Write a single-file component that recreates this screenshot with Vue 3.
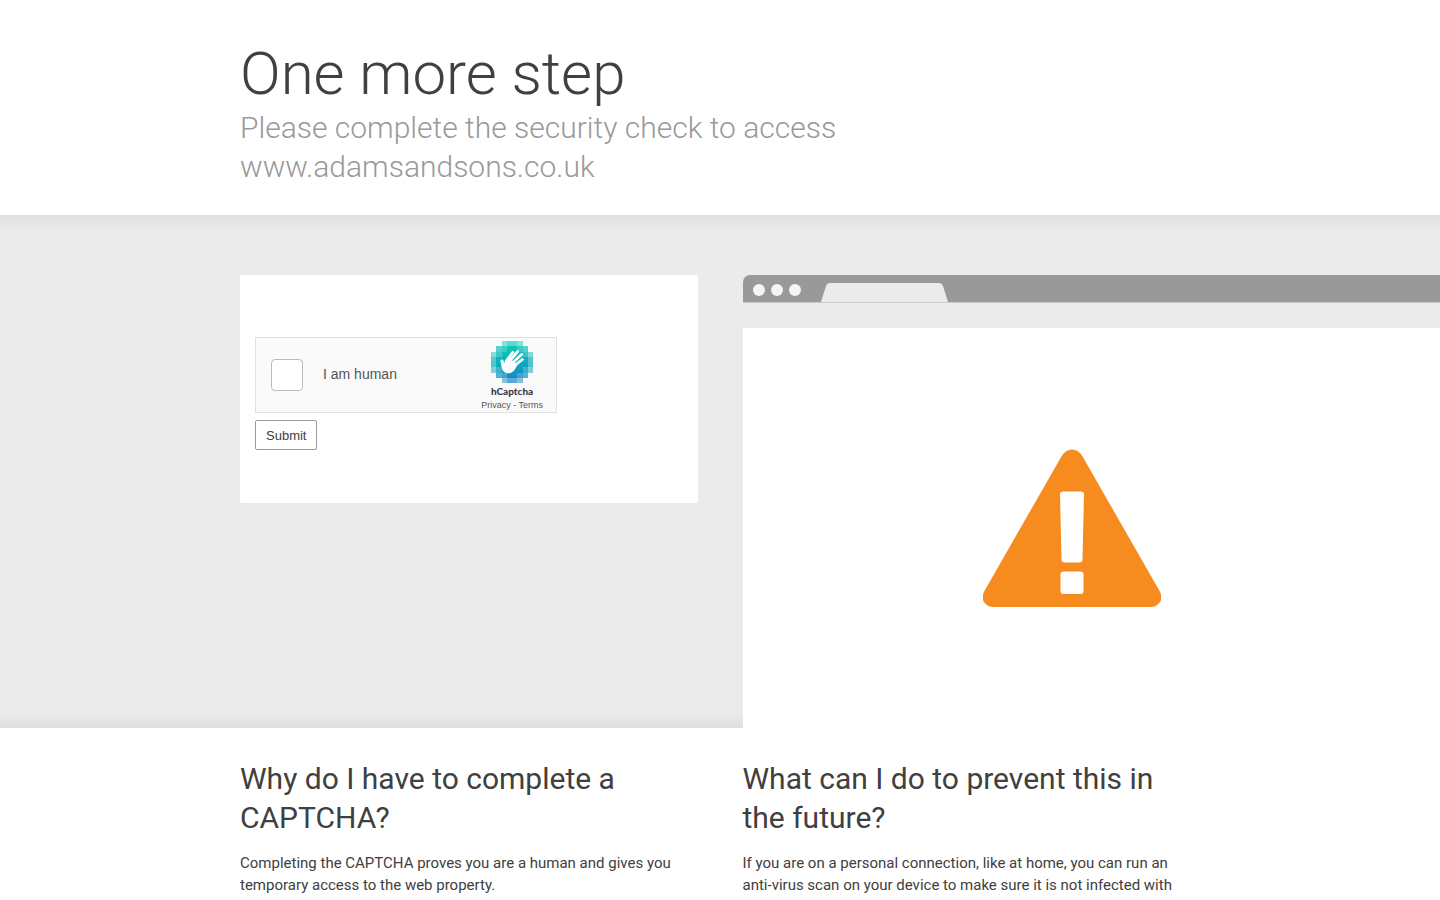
<script setup>
const cells = []
const fades = { '0-2': 0.5, '0-3': 0.7, '1-1': 0.7, '1-2': 0.8 }
for (let row = 0; row < 8; row++) {
  for (let col = 0; col < 8; col++) {
    const a = Math.min(row, 7 - row)
    const b = Math.min(col, 7 - col)
    const lo = Math.min(a, b)
    const hi = Math.max(a, b)
    if (lo === 0 && hi < 2) continue
    cells.push({ x: col * 4, y: row * 4, o: fades[`${lo}-${hi}`] || 1 })
  }
}
</script>

<template>
  <div class="page">
    <header class="wrapper header">
      <h1>One more step</h1>
      <h2>Please complete the security check to access www.adamsandsons.co.uk</h2>
    </header>

    <main>
      <section class="highlight">
        <div class="wrapper columns">
          <form class="challenge" @submit.prevent>
            <div class="captcha">
              <input id="human" type="checkbox" />
              <label for="human">I am human</label>
              <div class="brand">
                <svg class="logo" viewBox="0 0 32 32" aria-hidden="true">
                  <defs>
                    <linearGradient id="teal" gradientUnits="userSpaceOnUse" x1="14" y1="0" x2="17" y2="32">
                      <stop offset="0" stop-color="#12cdb9" />
                      <stop offset="0.5" stop-color="#0bafbb" />
                      <stop offset="1" stop-color="#1580c4" />
                    </linearGradient>
                  </defs>
                  <g fill="url(#teal)" shape-rendering="crispEdges">
                    <rect v-for="(c, i) in cells" :key="i" :x="c.x" :y="c.y" width="4" height="4" :opacity="c.o" />
                  </g>
                  <g fill="none" stroke="#fff" stroke-linecap="round">
                    <path d="M11.500 15.500L16.600 8.600M13.500 16L20.300 8M15.500 17.500L23.300 10.200M17 19.500L23.900 14.100" stroke-width="2.100" />
                    <path d="M8.400 15.200L9.800 19" stroke-width="2.300" />
                  </g>
                  <path d="M10.200 17L10.700 15.200L12 13.500L15 14L18 16L20 18.400C18.800 20.500 17.800 22.500 16.300 23.700C13.800 25.400 10.200 24.600 8.800 22C7.900 20 7.700 17.800 7.300 15.500Z" fill="#fff" />
                </svg>
                <span class="name">hCaptcha</span>
                <span class="links"><a href="#privacy">Privacy</a> - <a href="#terms">Terms</a></span>
              </div>
            </div>
            <button type="submit">Submit</button>
          </form>

          <div class="browser">
            <div class="bar">
              <i></i><i></i><i></i>
              <svg class="tab" viewBox="0 0 128 19" aria-hidden="true">
                <path d="M0 19L5 3Q6 0 9 0H118Q121 0 122 3L127 19Z" fill="#ebebeb" />
              </svg>
            </div>
            <div class="screen">
              <svg class="warning" viewBox="0 0 178 158" aria-hidden="true">
                <path d="M79 6.500Q83 0.500 89 0.500Q95 0.500 99 6.500L176 141Q180 148 177 153Q174 158 167 158H11Q4 158 1 153Q-2 148 2 141Z" fill="#f68b1f" />
                <path d="M80 42.500H98Q101 42.500 101 45.500L99.500 110Q99.500 113.500 96.500 113.500H81.500Q78.500 113.500 78.500 110L77 45.500Q77 42.500 80 42.500Z" fill="#fff" />
                <rect x="77.500" y="122.500" width="23" height="22.500" rx="3" fill="#fff" />
              </svg>
            </div>
          </div>
        </div>
      </section>

      <section class="wrapper columns answers">
        <article>
          <h2>Why do I have to complete a CAPTCHA?</h2>
          <p>Completing the CAPTCHA proves you are a human and gives you temporary access to the web property.</p>
        </article>
        <article>
          <h2>What can I do to prevent this in the future?</h2>
          <p>If you are on a personal connection, like at home, you can run an anti-virus scan on your device to make sure it is not infected with</p>
        </article>
      </section>
    </main>
  </div>
</template>

<style>
body {
  margin: 0;
  background: #fff;
}
</style>

<style scoped>
.page {
  font-family: Roboto, "Liberation Sans", sans-serif;
  font-size: 15px;
  line-height: 22px;
  color: #404040;
  overflow: hidden;
}
.page * {
  box-sizing: border-box;
}
.wrapper {
  max-width: 960px;
  margin: 0 auto;
}
h1,
h2,
p {
  margin: 0;
}
h1 {
  font-size: 60px;
  line-height: 68px;
  font-weight: 300;
}
h2 {
  font-size: 30px;
  line-height: 39px;
  font-weight: 400;
}
.header {
  padding: 40px 0 29px;
}
.header h2 {
  max-width: 640px;
  font-weight: 300;
  color: #999;
}
.columns {
  display: grid;
  grid-template-columns: 1fr 1fr;
  column-gap: 45px;
}
.highlight {
  padding-top: 60px;
  background:
    linear-gradient(#dedede, #ebebeb) top / 100% 14px no-repeat,
    linear-gradient(#ebebeb, #dedede) bottom / 100% 14px no-repeat,
    #ebebeb;
}
.challenge {
  align-self: start;
  padding: 62px 15px 53px;
  background: #fff;
  border-radius: 2px;
}
.captcha {
  display: flex;
  align-items: center;
  width: 302px;
  height: 76px;
  padding: 0 13px 0 15px;
  background: #fafafa;
  border: 1px solid #e0e0e0;
  font-family: "Liberation Sans", Arial, sans-serif;
}
.captcha input {
  appearance: none;
  width: 32px;
  height: 32px;
  margin: 0;
  background: #fff;
  border: 1px solid #bbb;
  border-radius: 4px;
}
.captcha label {
  padding-bottom: 2px;
  margin-left: 20px;
  font-size: 14px;
  color: #555;
}
.brand {
  display: flex;
  flex-direction: column;
  align-items: center;
  padding-top: 2px;
  margin-left: auto;
}
.logo {
  width: 42px;
  height: 42px;
}
.name {
  font-family: Lato, "Noto Sans", sans-serif;
  font-size: 10px;
  line-height: 16px;
  font-weight: 900;
  color: #3b3b4f;
}
.links {
  font-size: 9px;
  line-height: 12px;
  color: #555;
}
.links a {
  color: inherit;
  text-decoration: none;
}
button {
  display: block;
  height: 30px;
  margin-top: 7px;
  padding: 0 10px;
  background: #fff;
  border: 1px solid #999;
  border-radius: 2px;
  font-family: "Liberation Sans", Arial, sans-serif;
  font-size: 13px;
  color: #404040;
}
.browser {
  margin-right: min(0px, calc((960px - 100vw) / 2));
}
.bar {
  display: flex;
  align-items: center;
  gap: 6px;
  height: 28px;
  padding: 2px 10px 0;
  background: #999;
  border-bottom: 1px solid #ccc;
  border-radius: 7px 0 0 0;
}
.bar i {
  width: 12px;
  height: 12px;
  background: #f5f5f5;
  border-radius: 50%;
}
.tab {
  align-self: flex-end;
  width: 128px;
  height: 19px;
  margin-left: 14px;
}
.screen {
  margin-top: 25px;
  height: 400px;
  padding: 121px 0 0 240px;
  background: #fff;
}
.warning {
  display: block;
  width: 178px;
  height: 158px;
}
.answers {
  padding-top: 31px;
}
.answers p {
  margin-top: 15px;
}
</style>
